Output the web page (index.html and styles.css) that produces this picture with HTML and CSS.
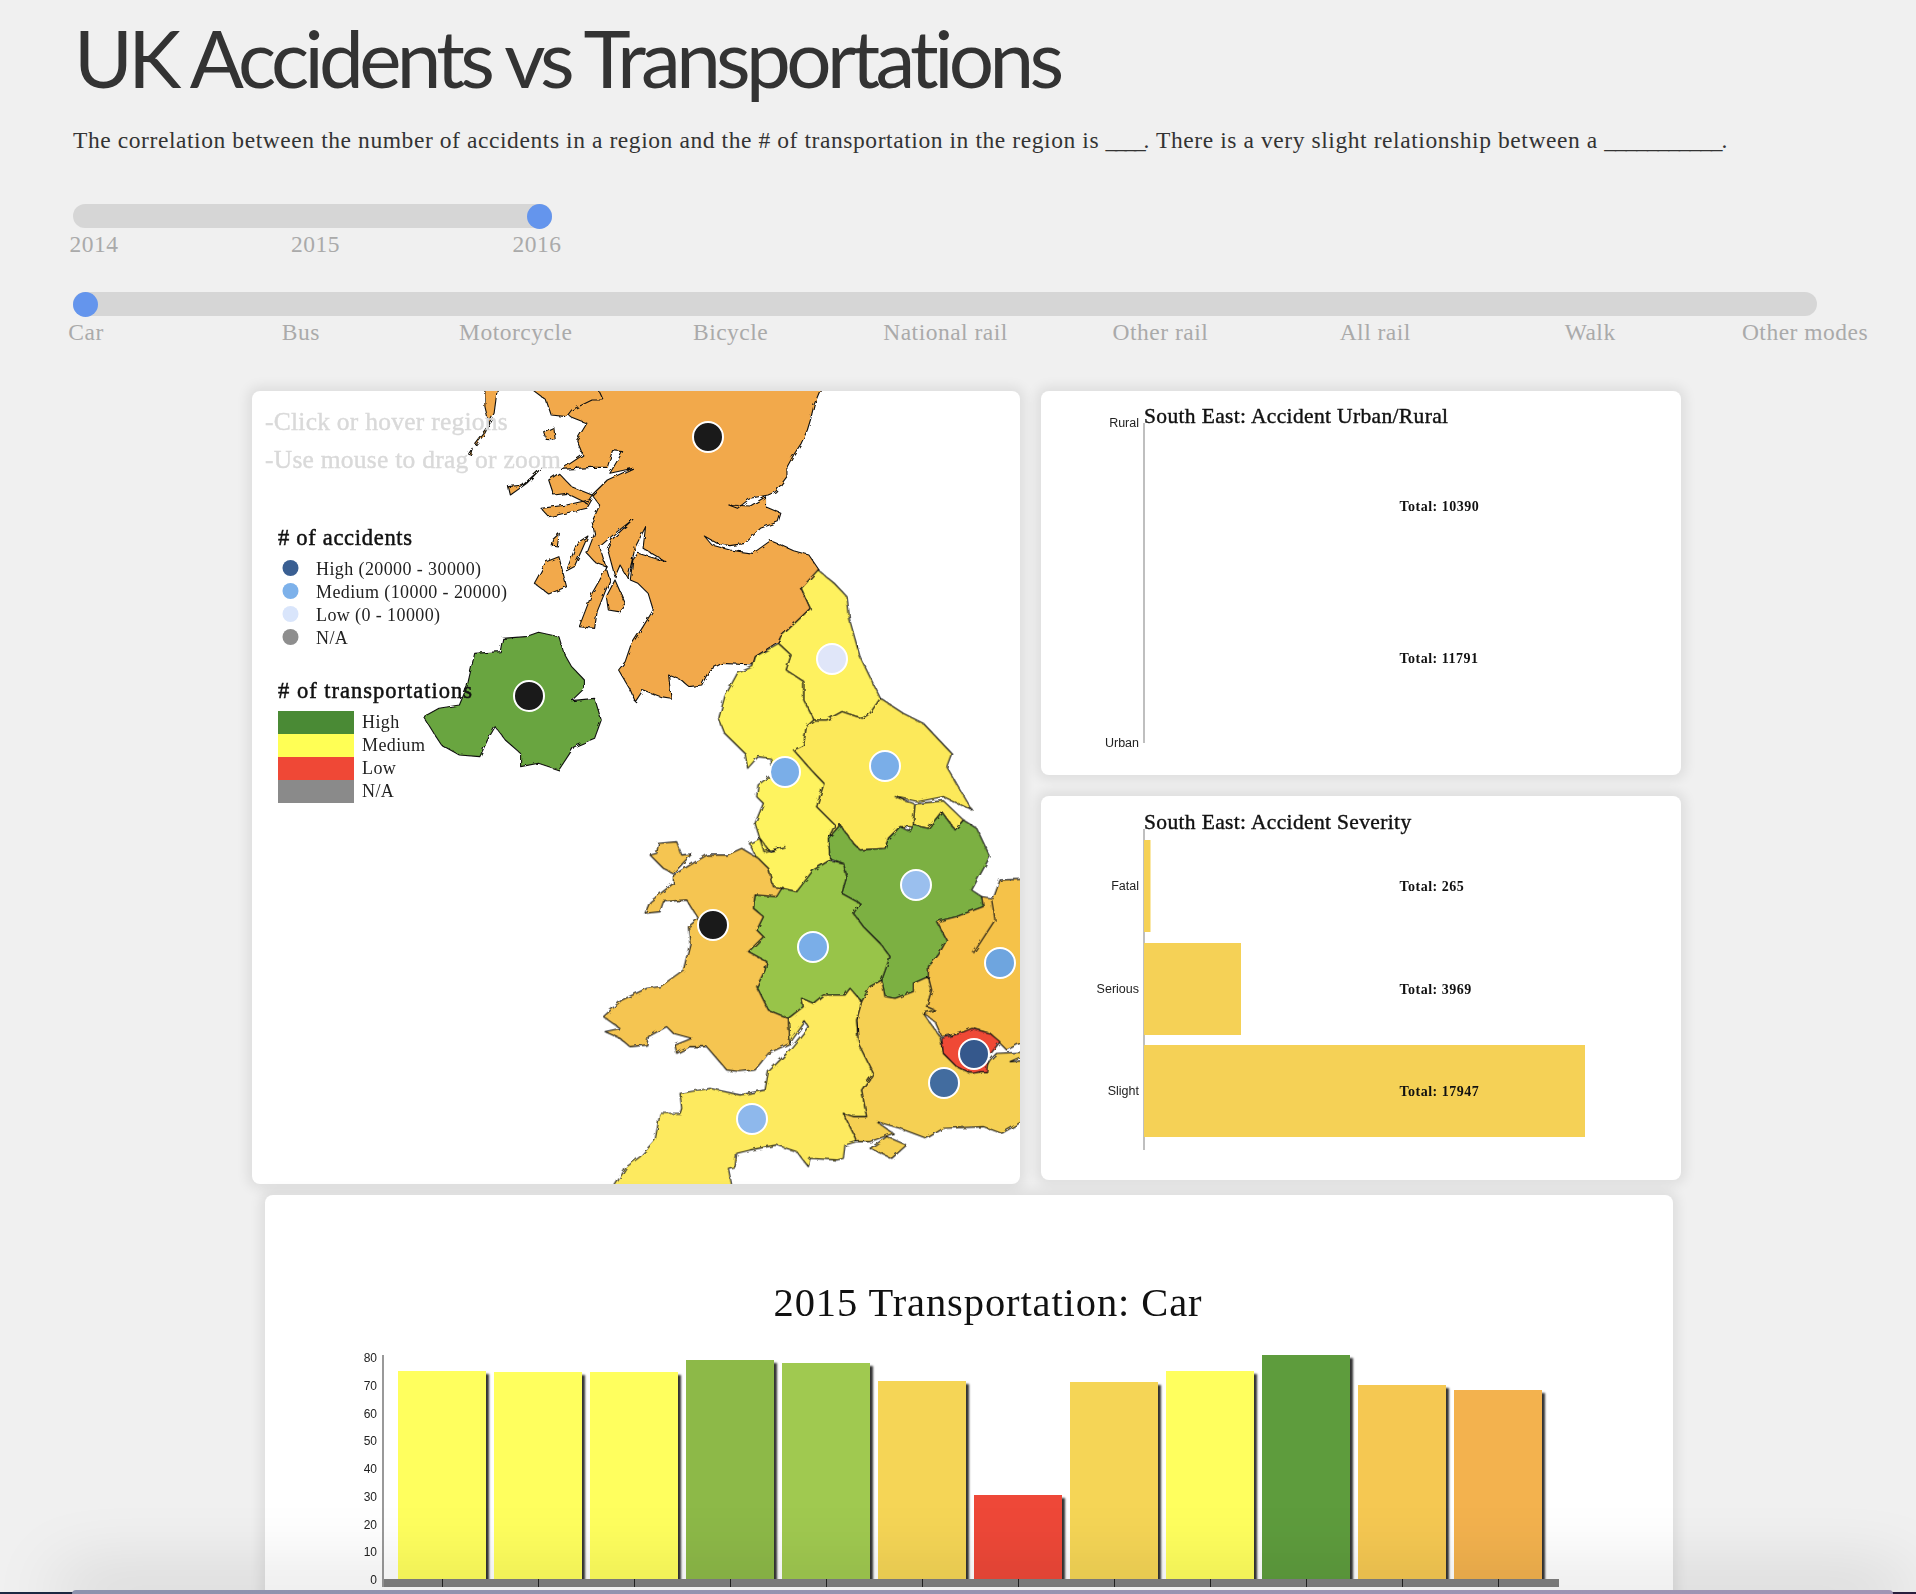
FILE: index.html
```html
<!DOCTYPE html>
<html lang="en">
<head>
<meta charset="utf-8">
<title>UK Accidents vs Transportations</title>
<link rel="stylesheet" href="styles.css">
</head>
<body>
<header class="intro">
  <h1 class="page-title">UK Accidents vs Transportations</h1>
  <p class="lede">The correlation between the number of accidents in a region and the # of transportation in the region is <span class="blank-short">____</span>. There is a very slight relationship between a <span class="blank-long">___________</span>.</p>
</header>

<section class="slider slider-year">
  <div class="track"><span class="thumb thumb-end"></span></div>
  <div class="ticks"><span>2014</span><span>2015</span><span>2016</span></div>
</section>

<section class="slider slider-mode">
  <div class="track"><span class="thumb thumb-start"></span></div>
  <div class="ticks"><span>Car</span><span>Bus</span><span>Motorcycle</span><span>Bicycle</span><span>National rail</span><span>Other rail</span><span>All rail</span><span>Walk</span><span>Other modes</span></div>
</section>

<main class="dashboard">
  <div class="top-row">
    <div class="card map-card">
      <svg class="map" viewBox="252 391 768 793" width="768" height="793">
        <defs>
          <filter id="rough" x="-5%" y="-5%" width="110%" height="110%">
            <feTurbulence type="fractalNoise" baseFrequency="0.16" numOctaves="2" seed="4"/>
            <feDisplacementMap in="SourceGraphic" scale="4"/>
          </filter>
        </defs>
        <g filter="url(#rough)">
          <g transform="translate(240 380) scale(.5102 .33333)" class="land">
            <path fill="#f2a94c" d="M720 20L1140 20 1125 75 1118 120 1112 150 1100 190 1085 225 1072 262 1072 290 1050 335 1035 345 1000 355 975 385 958 375 1000 378 1030 350 1030 380 1060 400 1055 425 1020 445 990 490 960 497 935 490 910 468 925 495 960 510 1005 520 1040 482 1060 495 1085 512 1115 525 1135 570 1100 625 1118 685 1060 770 1055 785 1010 830 1005 855 945 850 920 870 905 915 880 920 865 900 840 885 845 955 825 950 790 930 775 965 765 930 742 870 755 845 765 800 790 740 810 690 800 640 780 610 765 600 770 540 780 520 835 545 790 505 795 440 775 500 760 595 745 555 735 590 720 505 728 480 770 418 735 460 705 500 725 600 700 695 695 745 665 740 690 640 720 560 695 545 680 520 695 460 690 425 705 375 690 345 720 300 770 265 725 280 750 215 730 212 720 262 690 262 630 268 672 225 660 180 680 130 650 112 640 100 690 20Z"/>
            <path fill="#f2a94c" d="M718 650L735 600 755 670 742 695 722 690Z"/>
            <path fill="#f2a94c" d="M577 610L600 545 625 530 640 620 605 642Z"/>
            <path fill="#f2a94c" d="M640 572L660 490 682 468 670 510 655 560Z"/>
            <path fill="#f2a94c" d="M605 300L625 280 650 320 690 345 680 370 640 340 615 345ZM590 385L640 375 690 358 680 385 650 395 605 410Z"/>
            <path fill="#f2a94c" d="M480 20L505 20 498 100 488 130 480 80Z"/>
            <path fill="#f2a94c" d="M565 20L700 20 712 60 690 60 650 90 640 110 610 105 600 60Z"/>
            <path fill="#f2a94c" d="M595 155L615 142 618 180 600 178ZM526 320L555 315 590 265 562 310 530 345ZM612 480L626 460 622 498 610 495Z"/>
            <path fill="#f2a94c" d="M460 190L490 130 478 165 462 195ZM448 222L455 205 452 225Z"/>
            <path fill="#69a540" d="M360 1010L390 985 430 975 445 920 460 820 510 815 515 775 560 770 585 757 625 770 635 820 650 860 675 900 675 925 650 962 695 955 708 1020 695 1075 655 1100 625 1170 585 1150 550 1160 550 1120 520 1080 500 1040 485 1080 470 1130 430 1125 395 1095 380 1060Z"/>
          </g>
          <g transform="translate(560 780) scale(.33333)" class="land">
            <path fill="#fef15f" d="M774 -630L823 -590 861 -550 869 -480 900 -370 961 -245 930 -200 907 -185 846 -205 800 -180 762 -180 731 -240 731 -295 678 -330 693 -375 655 -410 662 -430 751 -515 724 -575Z"/>
            <path fill="#fef35e" d="M655 -410L693 -375 678 -330 731 -295 731 -240 762 -180 739 -160 731 -105 701 -90 754 -30 792 10 770 80 825 135 805 175 810 240 760 270 735 310 710 335 670 325 640 320 625 265 590 235 568 190 600 175 630 215 675 200 612 215 585 130 610 70 590 50 594 15 640 -20 632 -65 594 -70 563 -35 555 -80 494 -140 476 -185 494 -250 532 -320 578 -340 586 -370Z"/>
            <path fill="#fce95a" d="M762 -180L800 -180 846 -205 907 -185 930 -200 961 -245 1030 -200 1090 -170 1175 -80 1160 -40 1236 90 1150 50 1075 65 1005 50 1065 72 1060 130 1085 150 1110 120 1145 95 1110 125 1085 150 1050 140 1020 140 985 175 975 205 900 210 880 190 840 135 805 175 825 135 770 80 792 10 754 -30 701 -90 731 -105 739 -160Z"/>
            <path fill="#fce95a" d="M1065 72L1150 62 1210 120 1185 150 1145 95 1105 145 1060 135Z"/>
            <path fill="#7bb042" d="M840 135L880 190 900 210 975 205 985 175 1020 140 1050 155 1060 135 1105 145 1145 95 1185 150 1210 120 1250 145 1290 230 1235 330 1265 350 1270 380 1190 410 1130 425 1160 480 1135 525 1105 560 1105 590 1060 610 1060 635 1005 655 975 650 965 600 990 530 960 490 910 440 880 400 900 370 845 340 860 290 850 250 810 235 805 175Z"/>
            <path fill="#98c448" d="M810 240L850 250 860 290 845 340 900 370 880 400 910 440 960 490 990 530 965 600 930 620 905 665 870 625 855 645 790 645 760 670 725 655 730 680 685 715 625 690 590 620 615 570 620 545 565 515 610 470 590 450 610 410 580 385 585 345 650 340 665 325 710 335 760 270Z"/>
            <path fill="#f5c551" d="M640 320L665 325 650 350 585 345 580 385 610 410 590 450 610 470 565 515 620 545 615 570 590 620 625 690 685 715 690 790 625 820 585 870 540 875 500 870 440 800 390 800 350 820 345 795 395 775 340 760 320 740 265 770 260 795 210 800 180 775 135 755 180 745 130 710 185 660 260 625 300 620 370 570 390 490 385 440 415 415 380 360 310 365 300 395 255 400 270 365 340 310 340 285 440 225 500 225 545 205 595 235 625 265Z"/>
            <path fill="#f5c551" d="M270 225L290 220 295 190 350 185 365 225 395 222 340 280 310 265Z"/>
            <path fill="#fdea5e" d="M685 715L730 680 725 655 760 670 790 645 855 645 870 625 905 665 890 720 895 790 930 860 940 880 905 930 920 1010 880 1010 850 1000 880 1060 890 1085 855 1095 850 1135 830 1140 750 1135 745 1160 710 1115 650 1095 570 1110 530 1120 525 1160 505 1165 520 1240 150 1240 200 1160 240 1130 285 1080 300 1000 360 1000 365 985 360 940 450 925 540 945 615 930 625 875 680 820 745 740 735 725 700 775 690 790Z"/>
            <path fill="#f5d053" d="M905 665L930 620 965 600 975 650 1005 655 1060 635 1060 610 1105 590 1115 630 1100 680 1125 690 1090 700 1140 770 1150 820 1190 860 1230 880 1270 875 1290 840 1310 820 1420 815 1350 845 1420 840 1420 1005 1325 1060 1270 1040 1150 1045 1100 1075 1020 1045 950 1025 1000 1060 930 1085 890 1085 880 1060 850 1000 880 1010 920 1010 905 930 940 880 930 860 895 790 890 720Z"/>
            <path fill="#f5d053" d="M930 1105L980 1070 1040 1095 995 1135Z"/>
            <path fill="#f5c24a" d="M1105 590L1105 560 1135 525 1160 480 1130 425 1190 410 1270 380 1265 350 1300 355 1320 300 1500 295 1500 790 1380 790 1340 810 1310 780 1290 760 1240 745 1200 760 1145 770 1125 725 1090 700 1125 690 1100 680 1115 630Z"/>
            <path fill="none" d="M1295 360L1305 420 1240 520"/>
            <path fill="#ef4836" d="M1145 775L1200 760 1235 745 1290 760 1320 785 1285 830 1280 875 1260 875 1240 880 1220 875 1190 860 1150 820Z"/>
          </g>
        </g>
        <g class="dots">
          <circle cx="708" cy="437" fill="#1a1a1a"/>
          <circle cx="529" cy="696" fill="#1a1a1a"/>
          <circle cx="832" cy="659" fill="#e0e6f9"/>
          <circle cx="785" cy="772" fill="#7aaee8"/>
          <circle cx="885" cy="766" fill="#7aaee8"/>
          <circle cx="713" cy="925" fill="#1a1a1a"/>
          <circle cx="813" cy="947" fill="#7aaee8"/>
          <circle cx="916" cy="885" fill="#9abfee"/>
          <circle cx="1000" cy="963" fill="#6ea5df"/>
          <circle cx="944" cy="1083" fill="#426c9f"/>
          <circle cx="974" cy="1054" fill="#35588c"/>
          <circle cx="752" cy="1119" fill="#8eb8ec"/>
        </g>
        <g class="hints">
          <text x="265" y="430">-Click or hover regions</text>
          <text x="265" y="468">-Use mouse to drag or zoom</text>
        </g>
        <g class="legend">
          <text class="legend-title" x="278" y="545"># of accidents</text>
          <circle cx="290.500" cy="568" r="8" fill="#3a5f92"/><text x="316" y="575">High (20000 - 30000)</text>
          <circle cx="290.500" cy="591" r="8" fill="#7db1ea"/><text x="316" y="598">Medium (10000 - 20000)</text>
          <circle cx="290.500" cy="614" r="8" fill="#d9e5fb"/><text x="316" y="621">Low (0 - 10000)</text>
          <circle cx="290.500" cy="637" r="8" fill="#8e8e8e"/><text x="316" y="644">N/A</text>
          <text class="legend-title legend-title-wide" x="278" y="698"># of transportations</text>
          <rect x="278" y="711" width="76" height="23" fill="#4a8a35"/><text x="362" y="728">High</text>
          <rect x="278" y="734" width="76" height="23" fill="#ffff55"/><text x="362" y="751">Medium</text>
          <rect x="278" y="757" width="76" height="23" fill="#ef4836"/><text x="362" y="774">Low</text>
          <rect x="278" y="780" width="76" height="23" fill="#8a8a8a"/><text x="362" y="797">N/A</text>
        </g>
      </svg>
    </div>

    <div class="side-column">
      <div class="card side-card">
        <svg class="side-chart" viewBox="1041 391 640 384" width="640" height="384">
          <line class="axis" x1="1144" y1="423" x2="1144" y2="743"/>
          <text class="side-title" x="1144" y="423">South East: Accident Urban/Rural</text>
          <text class="cat" x="1139" y="427">Rural</text>
          <text class="cat" x="1139" y="747">Urban</text>
          <text class="total" x="1399.500" y="511">Total: 10390</text>
          <text class="total" x="1399.500" y="663">Total: 11791</text>
        </svg>
      </div>
      <div class="card side-card">
        <svg class="side-chart" viewBox="1041 796 640 384" width="640" height="384">
          <line class="axis" x1="1144" y1="829" x2="1144" y2="1150"/>
          <rect class="sev" x="1144" y="840" width="6.500" height="92"/>
          <rect class="sev" x="1144" y="943" width="97" height="92"/>
          <rect class="sev" x="1144" y="1045" width="441" height="92"/>
          <text class="side-title" x="1144" y="829">South East: Accident Severity</text>
          <text class="cat" x="1139" y="890">Fatal</text>
          <text class="cat" x="1139" y="993">Serious</text>
          <text class="cat" x="1139" y="1095">Slight</text>
          <text class="total" x="1399.500" y="891">Total: 265</text>
          <text class="total" x="1399.500" y="994">Total: 3969</text>
          <text class="total" x="1399.500" y="1096">Total: 17947</text>
        </svg>
      </div>
    </div>
  </div>

  <div class="card trend-card">
    <h2 class="trend-title">2015 Transportation: Car</h2>
    <div class="trend-plot">
      <div class="y-axis"><span>80</span><span>70</span><span>60</span><span>50</span><span>40</span><span>30</span><span>20</span><span>10</span><span>0</span></div>
      <div class="plot-area">
        <div class="bars">
          <div class="bar bar-y1" style="height:208px"></div>
          <div class="bar bar-y1" style="height:207px"></div>
          <div class="bar bar-y1" style="height:207px"></div>
          <div class="bar bar-g2" style="height:219px"></div>
          <div class="bar bar-g3" style="height:216px"></div>
          <div class="bar bar-o1" style="height:198px"></div>
          <div class="bar bar-r" style="height:84px"></div>
          <div class="bar bar-o1" style="height:197px"></div>
          <div class="bar bar-y1" style="height:208px"></div>
          <div class="bar bar-g1" style="height:224px"></div>
          <div class="bar bar-o2" style="height:194px"></div>
          <div class="bar bar-o3" style="height:189px"></div>
        </div>
        <div class="x-axis"><i></i><i></i><i></i><i></i><i></i><i></i><i></i><i></i><i></i><i></i><i></i><i></i></div>
      </div>
    </div>
  </div>
</main>

<div class="dock-base"></div>
<div class="dock-edge"></div>
</body>
</html>
```

FILE: styles.css
```css
html, body {
  margin: 0;
  height: 1594px;
  overflow: hidden;
}
body {
  position: relative;
  background: #f0f0f0;
  color: #333;
  font-family: "Liberation Serif", serif;
}
.intro { padding: 19px 0 0 73px; }
.page-title {
  margin: 0 0 0 1px;
  font: 400 80px/76px Lato, "Open Sans", sans-serif;
  letter-spacing: -4.650px;
  color: #333;
  white-space: nowrap;
}
.lede {
  margin: 31px 0 0;
  font-size: 23.500px;
  line-height: 28px;
  letter-spacing: .58px;
  color: #333;
  white-space: nowrap;
}
.blank-short { letter-spacing: -2.250px; }
.blank-long { letter-spacing: -1.100px; }
.slider { margin-left: 73px; }
.slider-year { width: 479px; margin-top: 50px; }
.slider-mode { width: 1744px; margin-top: 35px; }
.track {
  position: relative;
  height: 24px;
  border-radius: 12px;
  background: #d6d6d6;
}
.thumb {
  position: absolute;
  top: -.5px;
  width: 25px;
  height: 25px;
  border-radius: 50%;
  background: #6495ed;
}
.thumb-end { right: 0; }
.thumb-start { left: 0; }
.ticks {
  display: flex;
  justify-content: space-between;
  margin-top: 3px;
  font-size: 23.500px;
  line-height: 26px;
  letter-spacing: .5px;
  color: #aaa;
}
.ticks span { width: 0; display: flex; justify-content: center; white-space: nowrap; flex: 0 0 auto; }
.slider-year .ticks { margin-left: 21px; margin-right: 15px; }
.slider-mode .ticks { margin-left: 13px; margin-right: 12px; }

.dashboard { margin-top: 46px; }
.top-row {
  display: flex;
  gap: 21px;
  margin-left: 252px;
}
.card {
  background: #fff;
  border-radius: 8px;
  box-shadow: 0 0 12px 5px rgba(0,0,0,.075);
}
.map-card { width: 768px; height: 793px; overflow: hidden; }
.map, .side-chart { display: block; }
.land path { stroke: #111; stroke-width: 1.1; vector-effect: non-scaling-stroke; stroke-linejoin: round; }
.dots circle { r: 15px; stroke: #fff; stroke-width: 2; }
.hints text { font-size: 25.500px; letter-spacing: .25px; fill: #d9d9d9; stroke: #d9d9d9; stroke-width: .4; }
.legend text { font-size: 18px; letter-spacing: .4px; fill: #222; }
.legend .legend-title { font-size: 22.500px; letter-spacing: .7px; fill: #111; stroke: #111; stroke-width: .5; }
.legend .legend-title-wide { letter-spacing: 1px; }

.side-column { display: flex; flex-direction: column; gap: 21px; }
.side-card { width: 640px; height: 384px; }
.axis { stroke: #aaa; stroke-width: 1.5; }
.sev { fill: #f5d156; }
.side-title { font-size: 21.500px; letter-spacing: .35px; fill: #111; stroke: #111; stroke-width: .4; }
.cat { font: 12.500px "Liberation Sans", sans-serif; text-anchor: end; fill: #222; }
.total { font-size: 14px; letter-spacing: .5px; font-weight: 700; fill: #111; }

.trend-card {
  box-sizing: border-box;
  position: relative;
  width: 1408px;
  height: 440px;
  margin: 11px 0 0 265px;
  padding-top: 85px;
}
.trend-title {
  margin: 0;
  padding-left: 38px;
  text-align: center;
  font-size: 40.500px;
  line-height: 46px;
  font-weight: 400;
  color: #111;
  letter-spacing: .9px;
}
.trend-plot { display: flex; margin: 29px 0 0 117px; height: 232px; }
.y-axis {
  width: 0;
  height: 222px;
  margin-top: 3px;
  display: flex;
  flex-direction: column;
  justify-content: space-between;
  font: 12px/0 "Liberation Sans", sans-serif;
  color: #222;
}
.y-axis span { display: flex; justify-content: flex-end; height: 0; align-items: center; margin-left: -5px; width: 0; }
.plot-area { border-left: 2px solid #999; width: 1175px; display: flex; flex-direction: column; justify-content: flex-end; }
.bars { display: flex; align-items: flex-end; gap: 8.200px; padding-left: 14px; }
.bar { width: 87.800px; box-shadow: 3px 3px 2px #333; }
.bar-y1 { background-color: #ffff5e; }
.bar-g1 { background-color: #5e9c3d; }
.bar-g2 { background-color: #8db948; }
.bar-g3 { background-color: #a0c950; }
.bar-o1 { background-color: #f5d556; }
.bar-o2 { background-color: #f5c852; }
.bar-o3 { background-color: #f3b24e; }
.bar-r { background-color: #ee4838; }
.x-axis { height: 8px; background: #808080; display: flex; padding-left: 58px; gap: 95px; }
.x-axis i { width: 1px; background: #222; flex: 0 0 1px; }

.dock-base {
  position: absolute;
  left: 0;
  right: 0;
  bottom: 0;
  height: 2px;
  background: linear-gradient(90deg, #1c2a44, #2a2040);
}
.dock-edge {
  position: absolute;
  left: 72px;
  right: 23px;
  bottom: 0;
  height: 4px;
  border-radius: 6px 6px 0 0;
  background: linear-gradient(90deg, #8d92ad, #a094b4);
  box-shadow: 0 0 70px 14px rgba(0,0,0,.17);
}
```
